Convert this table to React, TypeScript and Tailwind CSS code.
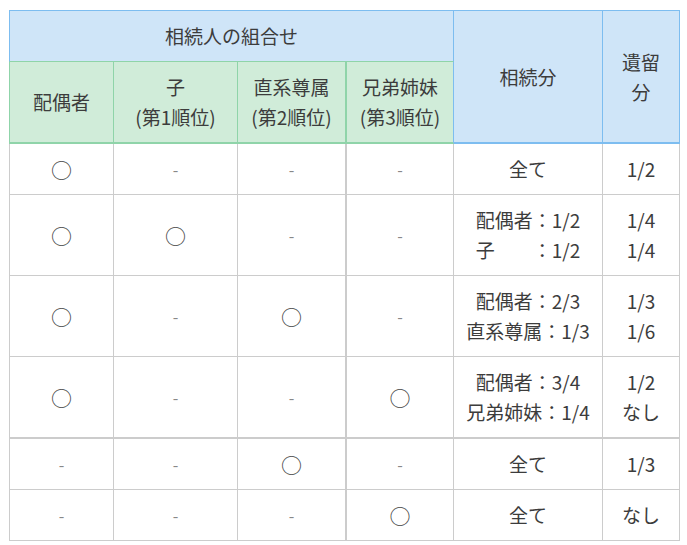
import React from "react";

// 相続人の組合せごとの相続分・遺留分
const rows: { cells: string[]; share: string[]; reserve: string[]; h: string; thick?: boolean }[] = [
  { cells: ["○", "-", "-", "-"], share: ["全て"], reserve: ["1/2"], h: "h-[51px]" },
  { cells: ["○", "○", "-", "-"], share: ["配偶者：1/2", "子　　：1/2"], reserve: ["1/4", "1/4"], h: "h-[81px]" },
  { cells: ["○", "-", "○", "-"], share: ["配偶者：2/3", "直系尊属：1/3"], reserve: ["1/3", "1/6"], h: "h-[81px]" },
  { cells: ["○", "-", "-", "○"], share: ["配偶者：3/4", "兄弟姉妹：1/4"], reserve: ["1/2", "なし"], h: "h-[82px]", thick: true },
  { cells: ["-", "-", "○", "-"], share: ["全て"], reserve: ["1/3"], h: "h-[51px]" },
  { cells: ["-", "-", "-", "○"], share: ["全て"], reserve: ["なし"], h: "h-[51px]" },
];

const cellBase = "flex flex-col items-center justify-center text-center border-[#cccccc] border-r";

function Mark({ v }: { v: string }) {
  if (v === "○") return <span className="text-[21px] leading-none text-[#444]">○</span>;
  return <span className="text-[#888] text-[16px]">-</span>;
}

export default function App() {
  return (
    <div
      className="bg-white w-[687px] h-[545px] pt-[10px] pl-[9px] text-[#3c3c3c] text-[19px] leading-[30px]"
      style={{ fontFamily: '"Noto Sans CJK JP", "Noto Sans", sans-serif' }}
    >
      <div className="grid grid-cols-[105px_124px_109px_107px_149px_77px] w-[671px]">
        {/* header */}
        <div className="col-span-4 h-[52px] flex items-center justify-center bg-[#cfe5f8] border border-[#7dbdf0] border-b-[#8fd4a9]">
          相続人の組合せ
        </div>
        <div className="row-span-2 flex items-center justify-center bg-[#cfe5f8] border-t border-r border-b-2 border-[#7dbdf0]">
          相続分
        </div>
        <div className="row-span-2 flex items-center justify-center text-center bg-[#cfe5f8] border-t border-r border-b-2 border-[#7dbdf0]">
          遺留
          <br />
          分
        </div>
        <div className="h-[82px] flex items-center justify-center bg-[#d0ecd9] border-l border-r border-b-2 border-[#8fd4a9]">
          配偶者
        </div>
        <div className="flex flex-col items-center justify-center bg-[#d0ecd9] border-r border-b-2 border-[#8fd4a9]">
          <span>子</span>
          <span>(第1順位)</span>
        </div>
        <div className="flex flex-col items-center justify-center bg-[#d0ecd9] border-r-2 border-b-2 border-[#8fd4a9]">
          <span>直系尊属</span>
          <span>(第2順位)</span>
        </div>
        <div className="flex flex-col items-center justify-center bg-[#d0ecd9] border-r border-b-2 border-[#8fd4a9] border-r-[#7dbdf0]">
          <span>兄弟姉妹</span>
          <span>(第3順位)</span>
        </div>

        {/* body */}
        {rows.map((r, i) => {
          const b = r.thick ? "border-b-2" : "border-b";
          return (
            <React.Fragment key={i}>
              {r.cells.map((c, j) => (
                <div
                  key={j}
                  className={`${cellBase} ${b} ${r.h} ${j === 0 ? "border-l" : ""} ${j === 2 ? "border-r-2" : ""}`}
                >
                  <Mark v={c} />
                </div>
              ))}
              <div className={`${cellBase} ${b}`}>
                {r.share.map((s) => (
                  <span key={s} className="whitespace-pre">{s}</span>
                ))}
              </div>
              <div className={`${cellBase} ${b}`}>
                {r.reserve.map((s, k) => (
                  <span key={k}>{s}</span>
                ))}
              </div>
            </React.Fragment>
          );
        })}
      </div>
    </div>
  );
}
